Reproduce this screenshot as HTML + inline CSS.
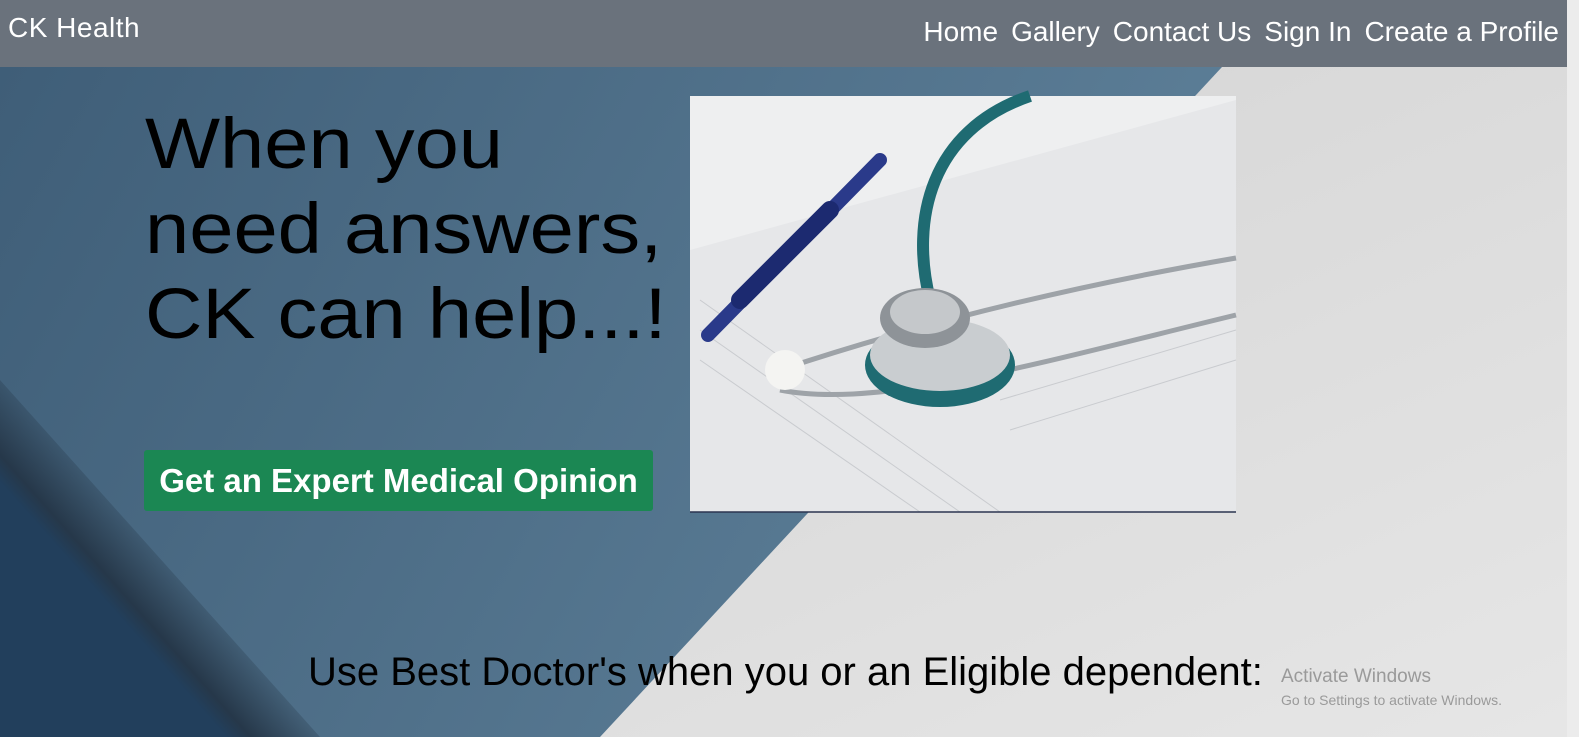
<!DOCTYPE html>
<html><head><meta charset="utf-8"><style>
html,body{margin:0;padding:0;width:1579px;height:737px;overflow:hidden;background:#e4e4e4;font-family:"Liberation Sans",sans-serif}
.nav{position:absolute;left:0;top:0;width:1567px;height:67px;background:#6a727c}
.brand{position:absolute;left:8px;top:12px;color:#fff;font-size:28px;letter-spacing:0.5px}
.links{position:absolute;right:20px;top:16px;color:#fff;font-size:28px}
.links span{margin-left:13px}
.h1{position:absolute;left:145px;top:102px;font-size:71px;line-height:85px;color:#000;transform:scaleX(1.12);transform-origin:0 0;white-space:nowrap}
.btn{position:absolute;left:144px;top:450px;width:509px;height:61px;background:#1b8753;border-radius:3px;color:#fff;font-weight:bold;font-size:33px;line-height:61px;text-align:center;white-space:nowrap}
.sub{position:absolute;left:308px;top:650px;font-size:40px;color:#000;white-space:nowrap}
.act{position:absolute;left:1281px;top:666px;color:#9a9a9a;font-size:19px}
.act2{position:absolute;left:1281px;top:692px;color:#9a9a9a;font-size:14px}
</style></head><body>
<svg width="1579" height="737" style="position:absolute;left:0;top:0">
<defs>
<linearGradient id="g1" x1="0" y1="0" x2="1" y2="0.3"><stop offset="0" stop-color="#3f5e78"/><stop offset="1" stop-color="#5d7f98"/></linearGradient>
<linearGradient id="g2" x1="0" y1="0" x2="1" y2="1"><stop offset="0" stop-color="#d0d0d0"/><stop offset="1" stop-color="#e6e6e6"/></linearGradient>
<linearGradient id="sh" gradientUnits="userSpaceOnUse" x1="190" y1="560" x2="100" y2="640"><stop offset="0" stop-color="#27394a" stop-opacity="0"/><stop offset="0.6" stop-color="#26384a"/><stop offset="0.75" stop-color="#223f5c"/><stop offset="1" stop-color="#223f5c"/></linearGradient>
</defs>
<rect x="0" y="67" width="1567" height="670" fill="url(#g2)"/>
<polygon points="0,67 1222,67 600,737 0,737" fill="url(#g1)"/>
<polygon points="0,380 320,737 0,737" fill="url(#sh)"/>
<rect x="1567" y="0" width="12" height="737" fill="#ececec"/>
<rect x="690" y="96" width="546" height="416" fill="#eeeff0"/>
<polygon points="690,250 1236,100 1236,512 690,512" fill="#e6e7e9"/>
<g stroke="#c9cbcf" stroke-width="1">
<line x1="700" y1="300" x2="1000" y2="512"/><line x1="700" y1="330" x2="960" y2="512"/><line x1="700" y1="360" x2="920" y2="512"/><line x1="1000" y1="400" x2="1236" y2="330"/><line x1="1010" y1="430" x2="1236" y2="360"/>
</g>
<line x1="708" y1="335" x2="880" y2="160" stroke="#2a3a8a" stroke-width="14" stroke-linecap="round"/>
<line x1="740" y1="300" x2="830" y2="210" stroke="#1c2a70" stroke-width="18" stroke-linecap="round"/>
<path d="M930,300 C910,220 930,130 1030,96" stroke="#1f6b72" stroke-width="12" fill="none"/>
<path d="M780,390 C880,410 1050,360 1236,315" stroke="#9ea3a8" stroke-width="5" fill="none"/>
<path d="M780,370 C900,330 1050,290 1236,258" stroke="#9ea3a8" stroke-width="5" fill="none"/>
<ellipse cx="940" cy="365" rx="75" ry="42" fill="#1f6b72"/>
<ellipse cx="940" cy="355" rx="70" ry="36" fill="#c9cdd0"/>
<ellipse cx="925" cy="318" rx="45" ry="30" fill="#8e9398"/>
<ellipse cx="925" cy="312" rx="35" ry="22" fill="#c5c8cb"/>
<circle cx="785" cy="370" r="20" fill="#f4f4f2"/>
<line x1="690" y1="512" x2="1236" y2="512" stroke="#2b3550" stroke-width="1.5"/>
</svg>
<div class="nav"></div>
<div class="brand">CK Health</div>
<div class="links"><span>Home</span><span>Gallery</span><span>Contact Us</span><span>Sign In</span><span>Create a Profile</span></div>
<div class="h1">When you<br>need answers,<br>CK can help...!</div>
<div class="btn">Get an Expert Medical Opinion</div>
<div class="sub">Use Best Doctor's when you or an Eligible dependent:</div>
<div class="act">Activate Windows</div>
<div class="act2">Go to Settings to activate Windows.</div>
</body></html>
